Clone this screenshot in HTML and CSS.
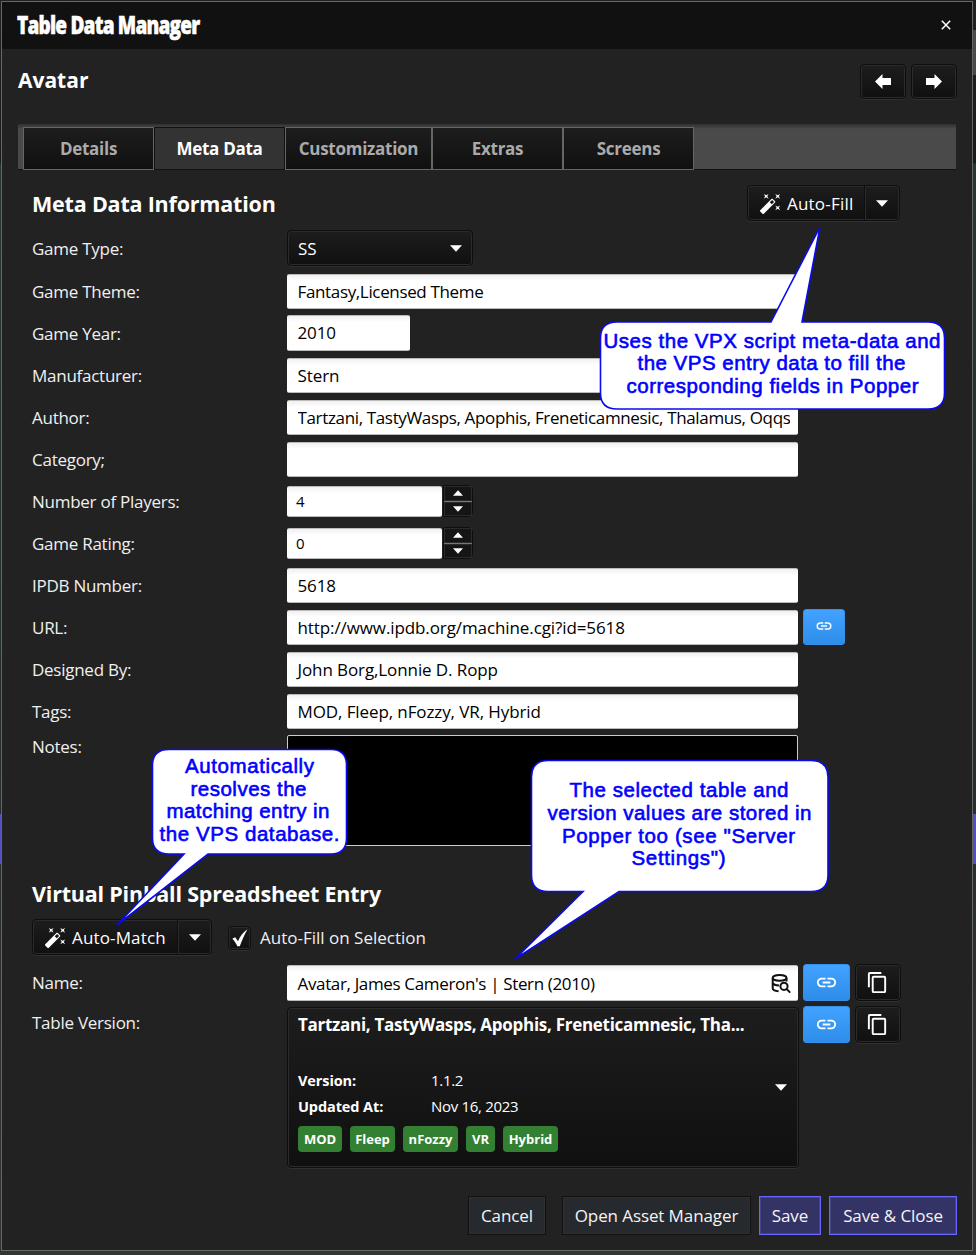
FILE: index.html
```
<!DOCTYPE html>
<html lang="en">
<head>
<meta charset="utf-8">
<title>Table Data Manager</title>
<link rel="stylesheet" href="styles.css">
</head>
<body>
<svg class="defs" width="0" height="0" aria-hidden="true">
  <symbol id="wand" viewBox="0 0 24 24"><path d="M7.5,5.6L5,7L6.4,4.5L5,2L7.5,3.4L10,2L8.6,4.5L10,7L7.5,5.6M19.5,15.4L22,14L20.6,16.5L22,19L19.5,17.6L17,19L18.4,16.5L17,14L19.5,15.4M22,2L20.6,4.5L22,7L19.5,5.6L17,7L18.4,4.5L17,2L19.5,3.4L22,2M13.34,12.78L15.78,10.34L13.66,8.22L11.22,10.66L13.34,12.78M14.37,7.29L16.71,9.63C17.1,10 17.1,10.65 16.71,11.04L5.04,22.71C4.65,23.1 4,23.1 3.63,22.71L1.29,20.37C0.9,20 0.9,19.35 1.29,18.96L12.96,7.29C13.35,6.9 14,6.9 14.37,7.29Z"/></symbol>
  <symbol id="link" viewBox="0 0 24 24"><path d="M3.9,12C3.9,10.29 5.29,8.9 7,8.9H11V7H7A5,5 0 0,0 2,12A5,5 0 0,0 7,17H11V15.1H7C5.29,15.1 3.9,13.71 3.9,12M8,13H16V11H8V13M17,7H13V8.9H17C18.71,8.9 20.1,10.29 20.1,12C20.1,13.71 18.71,15.1 17,15.1H13V17H17A5,5 0 0,0 22,12A5,5 0 0,0 17,7Z"/></symbol>
  <symbol id="copy" viewBox="0 0 24 24"><path d="M19,21H8V7H19M19,5H8A2,2 0 0,0 6,7V21A2,2 0 0,0 8,23H19A2,2 0 0,0 21,21V7A2,2 0 0,0 19,5M16,1H4A2,2 0 0,0 2,3V17H4V3H16V1Z"/></symbol>
  <symbol id="down" viewBox="0 0 12 7"><path d="M0 0.3H12L6 6.8Z"/></symbol>
  <symbol id="arrow" viewBox="0 0 16 15"><path d="M0 7.5L7.5 0V4H16V11H7.5V15Z"/></symbol>
</svg>

<div class="dialog">
  <header class="titlebar">
    <span class="title">Table Data Manager</span>
    <svg class="close" viewBox="0 0 10 10"><path d="M.8 .8L9.2 9.2M9.2 .8L.8 9.2"/></svg>
  </header>

  <div class="subhead">
    <h1 class="table-name">Avatar</h1>
    <div class="nav">
      <button class="btn nav-btn"><svg class="arrow"><use href="#arrow"/></svg></button>
      <button class="btn nav-btn"><svg class="arrow next"><use href="#arrow"/></svg></button>
    </div>
  </div>

  <nav class="tabs">
    <div class="tab">Details</div>
    <div class="tab active">Meta Data</div>
    <div class="tab wide">Customization</div>
    <div class="tab">Extras</div>
    <div class="tab">Screens</div>
  </nav>

  <main class="content">
    <div class="section-head">
      <h2 class="heading">Meta Data Information</h2>
      <div class="btn split fill">
        <div class="split-main"><svg class="wand"><use href="#wand"/></svg><span class="fill-text">Auto-Fill</span></div>
        <div class="split-drop"><svg class="down"><use href="#down"/></svg></div>
      </div>
    </div>

    <div class="row type"><label class="label">Game Type:</label><div class="btn combo"><span>SS</span><svg class="down"><use href="#down"/></svg></div></div>
    <div class="row"><label class="label">Game Theme:</label><div class="field tight">Fantasy,Licensed Theme</div></div>
    <div class="row high"><label class="label">Game Year:</label><div class="field year">2010</div></div>
    <div class="row"><label class="label">Manufacturer:</label><div class="field">Stern</div></div>
    <div class="row"><label class="label">Author:</label><div class="field tight"><span class="clip">Tartzani, TastyWasps, Apophis, Freneticamnesic, Thalamus, Oqqs</span></div></div>
    <div class="row"><label class="label">Category;</label><div class="field"></div></div>
    <div class="row low"><label class="label">Number of Players:</label><div class="field spin">4</div><div class="steps"><div class="step"><svg class="tri up"><use href="#down"/></svg></div><div class="step"><svg class="tri"><use href="#down"/></svg></div></div></div>
    <div class="row low"><label class="label">Game Rating:</label><div class="field spin">0</div><div class="steps"><div class="step"><svg class="tri up"><use href="#down"/></svg></div><div class="step"><svg class="tri"><use href="#down"/></svg></div></div></div>
    <div class="row"><label class="label">IPDB Number:</label><div class="field">5618</div></div>
    <div class="row"><label class="label">URL:</label><div class="field">http://www.ipdb.org/machine.cgi?id=5618</div><button class="blue url-link"><svg class="link small"><use href="#link"/></svg></button></div>
    <div class="row"><label class="label">Designed By:</label><div class="field">John Borg,Lonnie D. Ropp</div></div>
    <div class="row"><label class="label">Tags:</label><div class="field">MOD, Fleep, nFozzy, VR, Hybrid</div></div>
    <div class="notes-row"><label class="label notes-label">Notes:</label><div class="notes"></div></div>

    <h2 class="heading entry">Virtual Pinball Spreadsheet Entry</h2>
    <div class="match-row">
      <div class="btn split match">
        <div class="split-main"><svg class="wand"><use href="#wand"/></svg><span class="match-text">Auto-Match</span></div>
        <div class="split-drop"><svg class="down"><use href="#down"/></svg></div>
      </div>
      <div class="btn check"><svg class="tick" viewBox="0 0 16 18"><path d="M0.3 9.8L3.2 8.2L6 12.3C8 7.500 11 3 15.500 .2C12.500 5.500 10 11 7.800 17.300H5.300C4 14.300 2.400 11.800 .3 9.800Z"/></svg></div>
      <span class="check-label">Auto-Fill on Selection</span>
    </div>
    <div class="name-row">
      <label class="label name-label">Name:</label>
      <div class="field tight name-field"><span>Avatar, James Cameron's | Stern (2010)</span>
        <svg class="dbsearch" viewBox="0 0 20 20"><g class="ink"><ellipse cx="8.600" cy="3.900" rx="6.900" ry="2.800"/><path d="M1.700 4V14.300C1.700 15.800 4.200 17 7.600 17.200M15.500 4V7.500M1.700 9C2.300 10.400 4.700 11.400 8 11.500"/><circle cx="13" cy="12.300" r="3.600"/><path d="M15.600 15L19.200 18.600"/></g></svg>
      </div>
      <button class="blue"><svg class="link"><use href="#link"/></svg></button>
      <button class="btn copy-btn"><svg class="copy"><use href="#copy"/></svg></button>
    </div>
    <div class="version-row">
      <label class="label version-label">Table Version:</label>
      <div class="btn version">
        <div class="version-info">
          <div class="version-title">Tartzani, TastyWasps, Apophis, Freneticamnesic, Tha...</div>
          <div class="fact"><b class="fact-key">Version:</b><span>1.1.2</span></div>
          <div class="fact"><b class="fact-key">Updated At:</b><span>Nov 16, 2023</span></div>
          <div class="badges">
            <span class="badge mod">MOD</span><span class="badge fleep">Fleep</span><span class="badge fozzy">nFozzy</span><span class="badge vr">VR</span><span class="badge hybrid">Hybrid</span>
          </div>
        </div>
        <svg class="down"><use href="#down"/></svg>
      </div>
      <button class="blue"><svg class="link"><use href="#link"/></svg></button>
      <button class="btn copy-btn"><svg class="copy"><use href="#copy"/></svg></button>
    </div>
  </main>

  <footer class="footer">
    <button class="action cancel">Cancel</button>
    <button class="action assets">Open Asset Manager</button>
    <button class="action primary save">Save</button>
    <button class="action primary save-close">Save &amp; Close</button>
  </footer>
</div>

<svg class="callouts" width="976" height="1255" viewBox="0 0 976 1255">
  <g class="bubble">
    <path d="M617 322H771L820 227L802 322H928Q944.500 322 944.500 338V393Q944.500 409 928 409H617Q600.500 409 600.500 393V338Q600.500 322 617 322Z"/>
    <path d="M169 749.500H331Q346.500 749.500 346.500 765.500V838Q346.500 854 331 854H208L117 925L184 854H169Q152.500 854 152.500 838V765.500Q152.500 749.500 169 749.500Z"/>
    <path d="M548 760.500H811Q828 760.500 828 777V875Q828 891.500 811 891.500H619L515 959L583 891.500H548Q531.500 891.500 531.500 875V777Q531.500 760.500 548 760.500Z"/>
  </g>
  <g class="bubble-text">
    <text x="603.500" y="348" textLength="337">Uses the VPX script meta-data and</text>
    <text x="637.500" y="370" textLength="268">the VPS entry data to fill the</text>
    <text x="626.500" y="393" textLength="292">corresponding fields in Popper</text>
    <text x="185" y="773" textLength="129">Automatically</text>
    <text x="190.500" y="796" textLength="116">resolves the</text>
    <text x="166.500" y="818" textLength="163">matching entry in</text>
    <text x="159.500" y="841" textLength="180">the VPS database.</text>
    <text x="569.500" y="797" textLength="219">The selected table and</text>
    <text x="547.500" y="820" textLength="264">version values are stored in</text>
    <text x="562" y="843" textLength="233">Popper too (see "Server</text>
    <text x="631.500" y="865" textLength="94">Settings")</text>
  </g>
</svg>
</body>
</html>
```
FILE: styles.css
```
* { box-sizing: border-box; }

body {
  margin: 0;
  width: 976px;
  height: 1255px;
  padding: 1px 3px 4px 1px;
  overflow: hidden;
  color: #f0f0f0;
  font: 17px "Open Sans", "Noto Sans", sans-serif;
  background:
    linear-gradient(#5550b8, #5550b8) 0 814px / 1px 50px no-repeat,
    linear-gradient(#5550b8, #5550b8) 973px 814px / 3px 50px no-repeat,
    linear-gradient(#4a4a4a, #4a4a4a) 973px 30px / 3px 45px no-repeat,
    linear-gradient(#222 0, #1a1a1a 163px, #283638 164px, #242c2d 700px, #303632 1255px);
}

.defs { position: absolute; }
svg { fill: #fff; flex: none; }
button { font: inherit; color: inherit; }

.dialog {
  width: 972px;
  height: 1250px;
  border: 1px solid #666;
  background: #222;
  display: flex;
  flex-direction: column;
}

.titlebar {
  height: 47px;
  padding: 0 21px 2px 15px;
  display: flex;
  align-items: center;
  justify-content: space-between;
  background: #111;
}
.title {
  width: 183px;
  white-space: nowrap;
  color: #fff;
  font: 800 24px/45px "Open Sans", sans-serif;
  letter-spacing: -1px;
  transform: scaleX(.793);
  transform-origin: 0 50%;
  -webkit-text-stroke: .5px #fff;
}
.close { width: 10px; height: 10px; fill: none; stroke: #fff; stroke-width: 1.5; }

.subhead {
  height: 75px;
  padding: 15px 15px 0 16px;
  display: flex;
  justify-content: space-between;
}
.table-name { margin: 0; color: #fff; font-size: 21px; line-height: 33px; }
.nav { display: flex; gap: 5px; }

.btn {
  display: flex;
  align-items: center;
  padding: 0;
  border: 1px solid #0e0e0e;
  border-radius: 4px;
  color: #fff;
  background: linear-gradient(#1d1d1d, #101010);
  box-shadow: inset 0 0 0 1px #2b2b2b, 0 1px 0 #303030;
}
.nav-btn { width: 46px; height: 35px; padding-right: 1px; justify-content: center; }
.arrow { width: 16px; height: 15px; }
.next { transform: scaleX(-1); }
.down { width: 12px; height: 7px; }

.tabs {
  height: 46px;
  margin: 0 16px 0 16px;
  padding: 3px 0 0 5px;
  display: flex;
  border-bottom: 1px solid #111;
  background: linear-gradient(#303030, #4a4a4a 5px);
}
.tab {
  width: 131px;
  height: 43px;
  border: 1px solid #666;
  color: #aaa;
  background: linear-gradient(#1d1d1d, #101010);
  font-weight: 700;
  letter-spacing: -.27px;
  line-height: 42px;
  text-align: center;
}
.tab.wide { width: 147px; }
.tab.active { color: #fff; border-color: #111; background: #333; }

.content { height: 998px; padding-left: 30px; }
.section-head { height: 58px; padding: 15px 72px 0 0; display: flex; justify-content: space-between; }
.heading { margin: 0; color: #fff; font-size: 21.5px; line-height: 38px; letter-spacing: -.2px; white-space: nowrap; }
.split { height: 36px; }
.split-main { height: 34px; display: flex; align-items: center; gap: 5px; padding-left: 11px; border-right: 1px solid #0e0e0e; box-shadow: 1px 0 0 #2b2b2b; }
.fill { width: 153px; }
.fill .split-main { width: 117px; }
.fill-text { letter-spacing: .2px; }
.match { width: 180px; }
.match .split-main { width: 145px; }
.match-text { letter-spacing: .15px; }
.split-drop { flex: 1; display: flex; justify-content: center; }
.wand { width: 23px; height: 23px; }

.row { height: 42px; padding-top: 4px; display: flex; }
.row.high { padding-top: 3px; }
.row.low { padding-top: 5px; }
.row.type { padding-top: 2px; }
.label { flex: none; width: 255px; margin-top: -4px; line-height: 43px; letter-spacing: -.26px; white-space: nowrap; }
.type .label { margin-top: -2px; line-height: 42px; }
.high .label { margin-top: -3px; }
.low .label { margin-top: -5px; }
.field {
  width: 511px;
  height: 35px;
  padding: 0 8px 0 10.5px;
  border-radius: 2px;
  overflow: hidden;
  color: #000;
  background: linear-gradient(#f0f0f0, #fff 6px);
  border-top: 1px solid #bbb;
  border-bottom: 1px solid #bbb;
  line-height: 33px;
  letter-spacing: -.1px;
  white-space: nowrap;
}
.tight { letter-spacing: -.35px; }
.clip { display: block; overflow: hidden; }
.year { width: 123px; height: 36px; }
.spin { width: 155px; height: 31px; margin-top: 1px; padding-left: 9px; font-size: 15px; line-height: 29px; }
.combo { width: 186px; height: 36px; padding: 0 10px; justify-content: space-between; }
.steps { width: 30px; height: 32px; margin-left: 1px; display: flex; flex-direction: column; border-radius: 0 4px 4px 0; border: 1px solid #0e0e0e; background: #777; gap: 1px; }
.step { flex: 1; display: flex; align-items: center; justify-content: center; background: #151515; border: 1px solid #2b2b2b; }
.tri { width: 10px; height: 6px; }
.up { transform: scaleY(-1); }

.blue {
  width: 47px;
  height: 37px;
  margin-left: 5px;
  padding: 0;
  display: flex;
  align-items: center;
  justify-content: center;
  border: 1px solid #3490ed;
  border-radius: 3px;
  background: linear-gradient(#42a2ff, #2e8de8);
}
.url-link { width: 42px; height: 36px; margin-top: -1px; }
.link { width: 23px; height: 23px; }
.link.small { width: 18px; height: 18px; margin-top: -2px; }
.copy-btn { width: 46px; height: 37px; margin-left: 5px; padding-right: 2px; justify-content: center; }
.copy { width: 23px; height: 23px; }

.notes-row { height: 144px; padding-top: 3px; display: flex; }
.notes-label { margin: 0; line-height: 24px; }
.notes { width: 511px; height: 111px; border: 1px solid #ccc; border-radius: 2px; background: #000; }

.entry { line-height: 36px; }
.match-row { height: 52px; padding-top: 7px; display: flex; }
.check { width: 23px; height: 24px; margin: 7px 0 0 16px; justify-content: center; }
.tick { width: 16px; height: 18px; }
.check-label { margin-left: 9px; line-height: 37px; }
.name-row { height: 42px; display: flex; }
.name-label, .version-label { margin: 0; line-height: 38px; }
.name-field { height: 36px; margin-top: 1px; padding-right: 7px; line-height: 35px; display: flex; justify-content: space-between; align-items: center; }
.dbsearch { width: 20px; height: 20px; margin-top: 2px; }
.ink { fill: none; stroke: #111; stroke-width: 2; }
.version-row { display: flex; align-items: flex-start; }
.version-label { line-height: 34px; }
.version { width: 512px; height: 161px; padding: 0 11px 0 10px; margin: 1px -1px 0 0; align-items: center; justify-content: space-between; }
.version-info { height: 159px; }
.version-title { height: 60px; line-height: 34px; font-weight: 700; letter-spacing: -.285px; white-space: nowrap; }
.fact { height: 26px; line-height: 25px; display: flex; font-size: 15px; letter-spacing: -.3px; }
.fact-key { width: 133px; font-size: 14.5px; letter-spacing: -.1px; }
.badges { display: flex; gap: 8px; margin-top: 6px; }
.badge { height: 26px; border-radius: 4px; background: #338033; font-size: 13px; font-weight: 700; line-height: 26px; text-align: center; }
.mod { width: 44px; }
.fleep { width: 45px; }
.fozzy { width: 55px; }
.vr { width: 29px; }
.hybrid { width: 55px; }

.footer { padding: 28px 15px 0 0; display: flex; justify-content: flex-end; gap: 8px; }
.action { height: 39px; padding: 0; border: 1px solid #111; background: #26292e; color: #f5f5f5; letter-spacing: -.1px; box-shadow: inset 0 0 0 1px #2c3035; }
.cancel { width: 78px; margin-right: 8px; }
.assets { width: 189px; }
.primary { border-color: #6666ff; background: #333366; box-shadow: inset 0 0 0 1px #44448a; }
.save { width: 62px; }
.save-close { width: 128px; }

.callouts { position: absolute; left: 0; top: 0; pointer-events: none; }
.bubble { fill: #fff; stroke: #0a0af0; stroke-width: 1.6; }
.bubble-text { fill: #00f; stroke: #00f; stroke-width: .6; font: 20.5px "Liberation Sans", Arial, sans-serif; }
```
